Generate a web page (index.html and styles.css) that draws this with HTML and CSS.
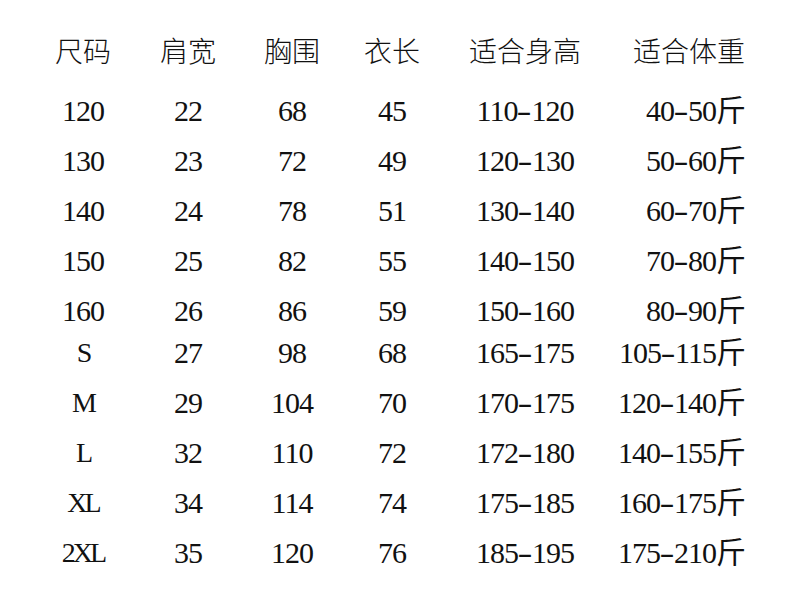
FILE: index.html
```html
<!DOCTYPE html>
<html lang="zh-CN">
<head>
<meta charset="utf-8">
<title>尺码表</title>
<link rel="stylesheet" href="styles.css">
</head>
<body>
<div class="chart">
  <div class="row head">
    <div class="c c1">尺码</div><div class="c c2">肩宽</div><div class="c c3">胸围</div><div class="c c4">衣长</div><div class="c c5">适合身高</div><div class="c c6">适合体重</div>
  </div>
  <div class="group first">
    <div class="row"><div class="c c1">120</div><div class="c c2">22</div><div class="c c3">68</div><div class="c c4">45</div><div class="c c5">110<span class="dash">-</span>120</div><div class="c c6">40<span class="dash">-</span>50斤</div></div>
    <div class="row"><div class="c c1">130</div><div class="c c2">23</div><div class="c c3">72</div><div class="c c4">49</div><div class="c c5">120<span class="dash">-</span>130</div><div class="c c6">50<span class="dash">-</span>60斤</div></div>
    <div class="row"><div class="c c1">140</div><div class="c c2">24</div><div class="c c3">78</div><div class="c c4">51</div><div class="c c5">130<span class="dash">-</span>140</div><div class="c c6">60<span class="dash">-</span>70斤</div></div>
    <div class="row"><div class="c c1">150</div><div class="c c2">25</div><div class="c c3">82</div><div class="c c4">55</div><div class="c c5">140<span class="dash">-</span>150</div><div class="c c6">70<span class="dash">-</span>80斤</div></div>
    <div class="row"><div class="c c1">160</div><div class="c c2">26</div><div class="c c3">86</div><div class="c c4">59</div><div class="c c5">150<span class="dash">-</span>160</div><div class="c c6">80<span class="dash">-</span>90斤</div></div>
  </div>
  <div class="group second">
    <div class="row"><div class="c c1 letters">S</div><div class="c c2">27</div><div class="c c3">98</div><div class="c c4">68</div><div class="c c5">165<span class="dash">-</span>175</div><div class="c c6">105<span class="dash">-</span>115斤</div></div>
    <div class="row"><div class="c c1 letters">M</div><div class="c c2">29</div><div class="c c3">104</div><div class="c c4">70</div><div class="c c5">170<span class="dash">-</span>175</div><div class="c c6">120<span class="dash">-</span>140斤</div></div>
    <div class="row"><div class="c c1 letters">L</div><div class="c c2">32</div><div class="c c3">110</div><div class="c c4">72</div><div class="c c5">172<span class="dash">-</span>180</div><div class="c c6">140<span class="dash">-</span>155斤</div></div>
    <div class="row"><div class="c c1 letters">XL</div><div class="c c2">34</div><div class="c c3">114</div><div class="c c4">74</div><div class="c c5">175<span class="dash">-</span>185</div><div class="c c6">160<span class="dash">-</span>175斤</div></div>
    <div class="row"><div class="c c1 letters">2XL</div><div class="c c2">35</div><div class="c c3">120</div><div class="c c4">76</div><div class="c c5">185<span class="dash">-</span>195</div><div class="c c6">175<span class="dash">-</span>210斤</div></div>
  </div>
</div>
</body>
</html>
```
FILE: styles.css
```css
html, body {
  margin: 0;
  padding: 0;
  background: #ffffff;
}
.chart {
  width: 800px;
  height: 601px;
  padding-top: 25px;
  box-sizing: border-box;
  color: #111111;
  font-family: "Liberation Serif", "Noto Sans CJK SC", serif;
}
.row {
  display: grid;
  grid-template-columns: 100px 110px 98px 102px 164px 138px;
  padding-left: 33px;
  height: 50px;
  align-items: center;
  font-size: 30px;
  letter-spacing: -1px;
  line-height: 1;
}
.row.head {
  font-family: "Noto Sans CJK SC", sans-serif;
  font-weight: 300;
  font-size: 28px;
  letter-spacing: 0;
}
.group.first {
  margin-top: 10.5px;
}
.group.second {
  margin-top: -7.5px;
}
.c {
  text-align: center;
  white-space: nowrap;
}
.c6 {
  text-align: right;
}
.letters {
  font-size: 28px;
  letter-spacing: -3px;
}
.dash {
  display: inline-block;
  width: 14px;
  transform: scaleX(1.5);
  text-align: center;
  letter-spacing: 0;
}
```
